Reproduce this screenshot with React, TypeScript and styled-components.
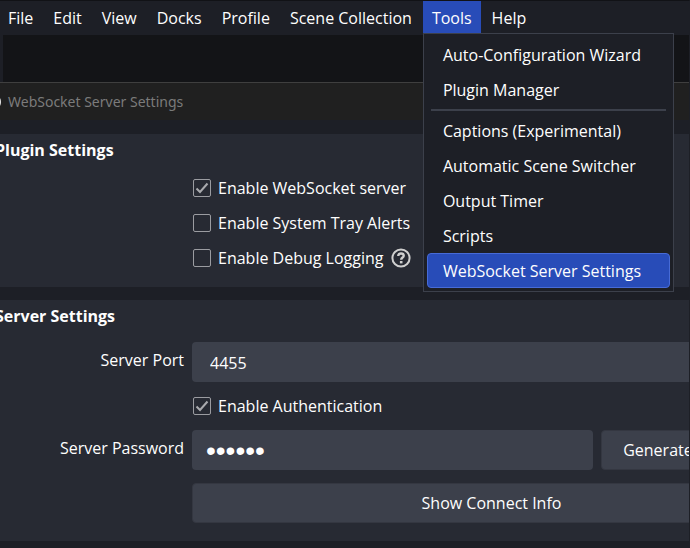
import React from "react";
import styled, { createGlobalStyle } from "styled-components";

const GlobalStyle = createGlobalStyle`
  *, *::before, *::after { box-sizing: border-box; }
  html, body { margin: 0; background: #1d1f26; }
  body { overflow: hidden; }
  body, button, input { font: 16px/22px "Open Sans", "Noto Sans", sans-serif; color: #fefefe; }
`;

const Page = styled.div`
  min-height: 100vh;
  display: flex;
  flex-direction: column;
  border-top: 1px solid #111216;
  border-right: 1px solid #1d1f26;
  background: #1d1f26;
`;

const MenuBar = styled.nav`
  display: flex;
  gap: 2px;
  height: 34px;
  flex: none;
  margin-left: -1px;
`;

const MenuEntry = styled.div`
  position: relative;
`;

const MenuButton = styled.button<{ $open?: boolean }>`
  height: 32px;
  padding: 2px 9px 0;
  border: 0;
  white-space: nowrap;
  background: ${(p) => (p.$open ? "#284cb8" : "transparent")};
`;

const Menu = styled.div`
  position: absolute;
  z-index: 2;
  top: 32px;
  left: 0;
  width: 251px;
  padding: 3px;
  border: 1px solid #3c404b;
  background: #1d1f26;
`;

const MenuItem = styled.button<{ $active?: boolean }>`
  display: block;
  width: 100%;
  height: 35px;
  padding: 0 15px;
  text-align: left;
  white-space: nowrap;
  border: 1px solid ${(p) => (p.$active ? "#476bd7" : "transparent")};
  border-radius: 4px;
  background: ${(p) => (p.$active ? "#284cb8" : "transparent")};
`;

const Divider = styled.hr`
  height: 2px;
  margin: 2px 4px;
  border: 0;
  background: #3c404b;
`;

const Preview = styled.div`
  height: 47px;
  flex: none;
  margin-left: 3px;
  background: #131417;
`;

const DialogClip = styled.div`
  overflow: hidden;
`;

const Dialog = styled.section`
  margin: 0 -114px 0 -20px;
  padding-bottom: 7px;
  background: #1d1f26;
`;

const TitleBar = styled.header`
  display: flex;
  align-items: center;
  gap: 7px;
  height: 38px;
  padding-left: 5px;
  border-top: 1px solid #3f3f3f;
  background: #202020;
  color: #7b7b7b;
  font-family: "Noto Sans", sans-serif;
  font-size: 14px;
`;

const Panels = styled.div`
  display: grid;
  gap: 13px;
  padding: 14px 0 0;
`;

const Panel = styled.section`
  padding: 5px 12px 18px 15px;
  background: #272a33;
`;

const PanelTitle = styled.h2`
  margin: 0;
  font-size: 16px;
  line-height: 22px;
  font-weight: 700;
`;

const Form = styled.div<{ $top: number }>`
  display: grid;
  grid-template-columns: 189px 1fr;
  column-gap: 8px;
  row-gap: 13px;
  padding-top: ${(p) => p.$top}px;
`;

const FieldLabel = styled.label`
  padding-top: 7px;
  text-align: right;
`;

const FieldRow = styled.div<{ $tight?: boolean }>`
  grid-column: 2;
  display: flex;
  align-items: center;
  gap: ${(p) => (p.$tight ? 7 : 8)}px;
`;

const CheckLabel = styled.label`
  display: flex;
  align-items: center;
  gap: 7px;
  height: 22px;
  padding-left: 1px;
`;

const CheckBox = styled.span`
  display: grid;
  width: 18px;
  height: 18px;
  & > * { grid-area: 1 / 1; }
`;

const CheckInput = styled.input`
  appearance: none;
  width: 18px;
  height: 18px;
  margin: 0;
  border: 1px solid #9b9ca1;
  border-radius: 2px;
  & + svg { visibility: hidden; pointer-events: none; }
  &:checked + svg { visibility: visible; }
`;

const TextField = styled.input`
  flex: 1;
  min-width: 0;
  height: 40px;
  padding: 2px 18px 0;
  border: 0;
  border-radius: 4px;
  background: #3c404b;
  &[type="password"] {
    padding: 2px 14px 0;
    font-family: "Liberation Sans", sans-serif;
    font-size: 28px;
  }
`;

const PushButton = styled.button<{ $wide?: boolean }>`
  ${(p) => (p.$wide ? "flex: 1;" : "")}
  height: 40px;
  padding: 0 21px;
  border: 1px solid #343741;
  border-radius: 4px;
  background: #3c404b;
  white-space: nowrap;
`;

function Check({ label, checked, children }: { label: string; checked?: boolean; children?: React.ReactNode }) {
  return (
    <FieldRow $tight>
      <CheckLabel>
        <CheckBox>
          <CheckInput type="checkbox" defaultChecked={checked} />
          <svg width="18" height="18" viewBox="0 0 18 18" fill="none" stroke="#a9aaae" strokeWidth="2">
            <path d="M3.5 9.500 7 13l7.500-8.500" />
          </svg>
        </CheckBox>
        {label}
      </CheckLabel>
      {children}
    </FieldRow>
  );
}

const HelpIcon = () => (
  <svg width="20" height="20" viewBox="0 0 20 20" fill="none" stroke="#cfcfcf">
    <circle cx="10" cy="10" r="8.600" strokeWidth="2" />
    <path d="M7.300 8V7.700c0-1.500 1.200-2.200 2.700-2.200s2.700.800 2.700 2.200c0 1.900-2.500 1.800-2.500 4" strokeWidth="2.400" />
    <path d="M10.200 13v2.400" strokeWidth="2.600" />
  </svg>
);

const tools = ["Captions (Experimental)", "Automatic Scene Switcher", "Output Timer", "Scripts"];

export default function App() {
  return (
    <>
      <GlobalStyle />
      <Page>
        <MenuBar>
          {["File", "Edit", "View", "Docks", "Profile", "Scene Collection"].map((name) => (
            <MenuEntry key={name}>
              <MenuButton>{name}</MenuButton>
            </MenuEntry>
          ))}
          <MenuEntry>
            <MenuButton $open>Tools</MenuButton>
            <Menu>
              <MenuItem>Auto-Configuration Wizard</MenuItem>
              <MenuItem>Plugin Manager</MenuItem>
              <Divider />
              {tools.map((name) => (
                <MenuItem key={name}>{name}</MenuItem>
              ))}
              <MenuItem $active>WebSocket Server Settings</MenuItem>
            </Menu>
          </MenuEntry>
          <MenuEntry>
            <MenuButton>Help</MenuButton>
          </MenuEntry>
        </MenuBar>
        <Preview />
        <DialogClip>
          <Dialog>
            <TitleBar>
              <svg width="16" height="16" viewBox="0 0 16 16">
                <circle cx="8" cy="8" r="7" fill="#202020" stroke="#e6e6e6" strokeWidth="2" />
              </svg>
              WebSocket Server Settings
            </TitleBar>
            <Panels>
              <Panel>
                <PanelTitle>Plugin Settings</PanelTitle>
                <Form $top={16}>
                  <Check label="Enable WebSocket server" checked />
                  <Check label="Enable System Tray Alerts" />
                  <Check label="Enable Debug Logging">
                    <HelpIcon />
                  </Check>
                </Form>
              </Panel>
              <Panel>
                <PanelTitle>Server Settings</PanelTitle>
                <Form $top={15}>
                  <FieldLabel htmlFor="port">Server Port</FieldLabel>
                  <FieldRow>
                    <TextField id="port" defaultValue="4455" />
                  </FieldRow>
                  <Check label="Enable Authentication" checked />
                  <FieldLabel htmlFor="password">Server Password</FieldLabel>
                  <FieldRow>
                    <TextField id="password" type="password" defaultValue="secret" />
                    <PushButton>Generate Password</PushButton>
                  </FieldRow>
                  <FieldRow>
                    <PushButton $wide>Show Connect Info</PushButton>
                  </FieldRow>
                </Form>
              </Panel>
            </Panels>
          </Dialog>
        </DialogClip>
      </Page>
    </>
  );
}
